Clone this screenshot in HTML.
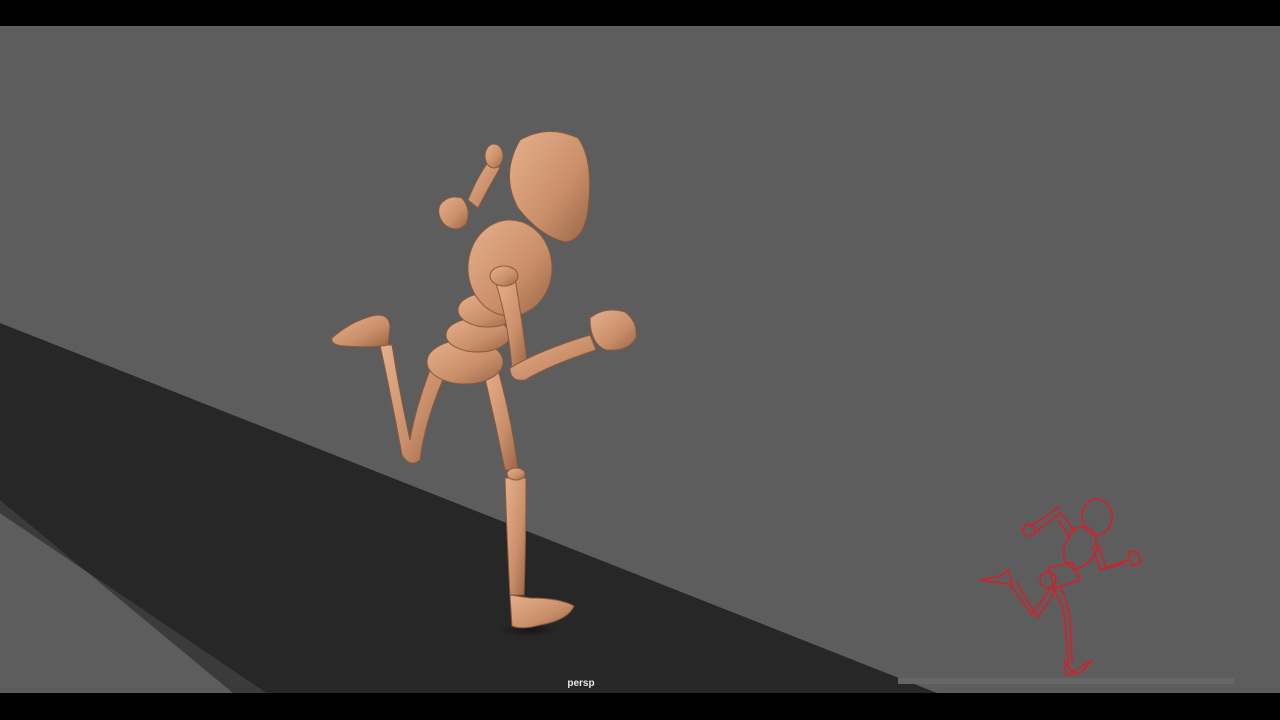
<!DOCTYPE html>
<html><head><meta charset="utf-8"><style>
html,body{margin:0;padding:0;background:#000;width:1280px;height:720px;overflow:hidden}
svg{display:block}
</style></head><body>
<svg width="1280" height="720" viewBox="0 0 1280 720" xmlns="http://www.w3.org/2000/svg">
<defs>
<linearGradient id="sk" x1="0" y1="0" x2="1" y2="1">
<stop offset="0" stop-color="#e6b08c"/><stop offset="0.6" stop-color="#c98f6a"/><stop offset="1" stop-color="#9a6546"/>
</linearGradient>
<radialGradient id="sh" cx="0.5" cy="0.5" r="0.5"><stop offset="0" stop-color="#111" stop-opacity="0.8"/><stop offset="1" stop-color="#111" stop-opacity="0"/></radialGradient>
</defs>
<rect x="0" y="0" width="1280" height="720" fill="#000"/>
<rect x="0" y="26" width="1280" height="667" fill="#5d5d5d"/>
<polygon points="0,323 937,693 266,693 0,513" fill="#272727"/>
<polygon points="0,500 0,513 266,693 233,693" fill="#3b3b3b"/>
<ellipse cx="528" cy="630" rx="30" ry="7" fill="url(#sh)"/>
<g fill="url(#sk)" stroke="#8a5a3e" stroke-width="1">
<!-- back leg -->
<path d="M380,345 Q392,400 402,455 Q410,468 420,460 Q425,420 445,375 L430,370 Q415,410 410,440 Q400,395 392,345 Z"/>
<path d="M332,338 Q350,322 372,316 Q388,312 390,326 L388,345 Q370,348 345,346 Q330,345 332,338 Z"/>
<!-- front leg -->
<path d="M483,370 Q495,420 505,470 L518,470 Q512,420 498,370 Z"/>
<path d="M505,478 Q507,540 510,595 L524,595 Q526,540 526,478 Z"/>
<ellipse cx="516" cy="474" rx="9" ry="6"/>
<path d="M510,595 L530,598 Q560,598 574,606 Q568,620 540,625 Q522,630 512,626 Z"/>
<!-- pelvis / torso -->
<ellipse cx="465" cy="362" rx="38" ry="22"/>
<ellipse cx="478" cy="335" rx="32" ry="17"/>
<ellipse cx="488" cy="310" rx="30" ry="17"/>
<ellipse cx="510" cy="268" rx="42" ry="48"/>
<!-- back arm -->
<path d="M468,200 Q478,175 490,160 L500,168 Q490,185 478,208 Z"/>
<ellipse cx="494" cy="156" rx="9" ry="12"/>
<path d="M440,205 Q448,194 462,198 Q472,210 466,224 Q456,234 444,224 Q436,214 440,205 Z"/>
<!-- front arm -->
<path d="M495,280 Q508,320 512,368 L528,368 Q522,320 515,278 Z"/>
<ellipse cx="504" cy="276" rx="14" ry="10"/>
<path d="M510,368 Q540,350 590,335 L596,350 Q550,365 525,380 Q510,382 510,368 Z"/>
<path d="M590,318 Q605,306 625,312 Q638,322 636,338 Q628,352 606,350 Q590,344 590,318 Z"/>
<!-- head -->
<path d="M520,140 Q548,124 578,138 Q594,160 588,210 Q584,240 565,242 Q540,236 518,208 Q500,175 520,140 Z"/>
</g>
<g fill="none" stroke="#d51f2a" stroke-width="1.6">
<ellipse cx="1097" cy="517" rx="15" ry="18"/>
<path d="M1072,530 Q1090,522 1095,535 L1097,550 Q1090,565 1074,570 Q1060,560 1065,545 Z"/>
<path d="M1048,568 L1072,562 L1080,580 L1055,588 Z"/>
<ellipse cx="1048" cy="580" rx="8" ry="8"/>
<path d="M1062,514 L1076,533 M1058,520 L1070,538"/>
<path d="M1060,506 L1040,520 L1030,527 M1062,512 L1043,526 L1035,533"/>
<circle cx="1029" cy="530" r="6"/>
<path d="M1092,546 L1100,570 L1125,563 M1098,544 L1106,568 L1128,560"/>
<path d="M1128,552 L1138,552 L1141,562 L1132,566 Z"/>
<path d="M1050,588 L1032,615 L1010,585 M1056,590 L1038,617 L1016,582"/>
<path d="M980,580 L1000,576 L1008,570 L1012,585 L995,582 Z"/>
<path d="M1052,588 Q1062,600 1065,620 L1068,662 L1072,662 L1070,620 Q1068,600 1060,587"/>
<path d="M1065,662 L1072,672 L1092,660 L1082,672 L1066,675 Z"/>
</g>
<rect x="898" y="678" width="336" height="6" fill="#666"/>
<text x="581" y="686" font-family="Liberation Sans, sans-serif" font-size="10" font-weight="bold" fill="#e8e8e8" text-anchor="middle">persp</text>
</svg>
</body></html>
